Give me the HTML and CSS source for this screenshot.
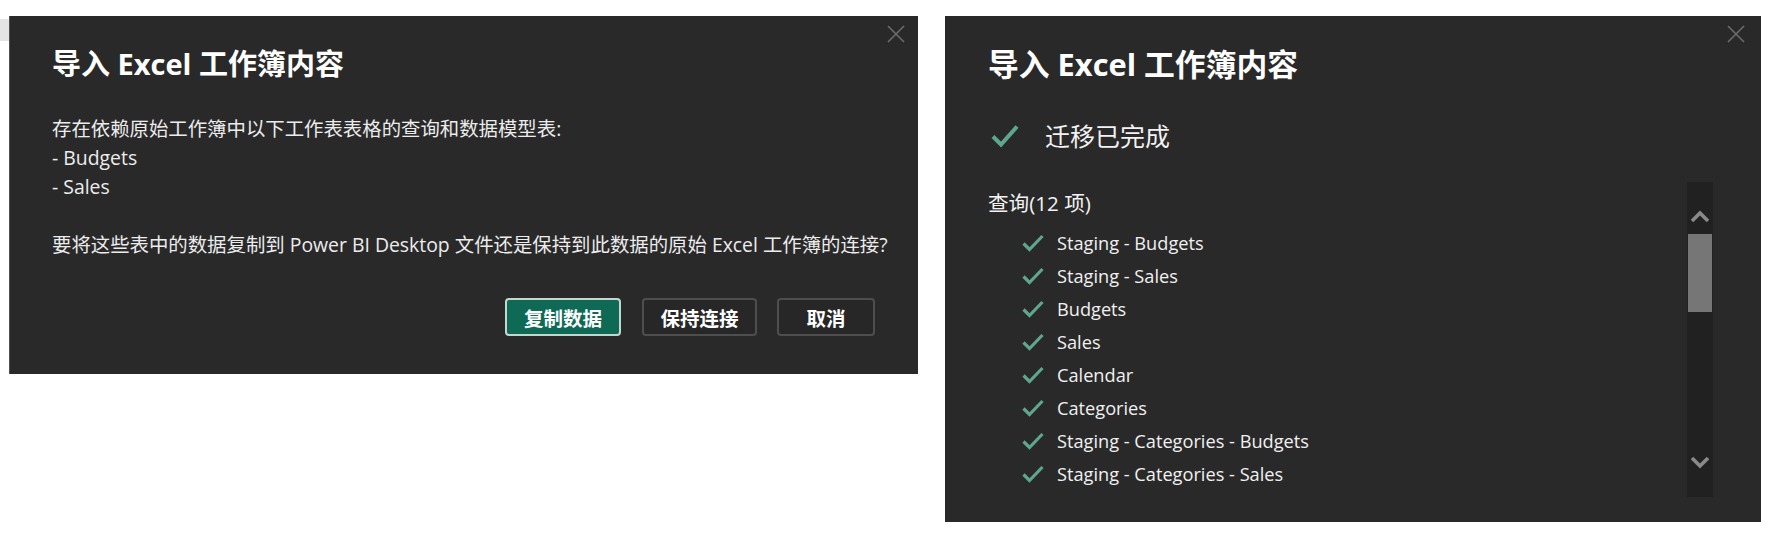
FILE: index.html
```html
<!DOCTYPE html>
<html lang="zh-CN">
<head>
<meta charset="utf-8">
<title>导入 Excel 工作簿内容</title>
<link rel="stylesheet" href="styles.css">
</head>
<body>
<div class="page">
  <div class="sliver"></div>

  <section class="dialog dialog-confirm">
    <button class="close" aria-label="关闭">
      <svg viewBox="0 0 18 18" width="18" height="18"><path d="M1 1 L17 17 M17 1 L1 17" stroke="#6b6b6b" stroke-width="1.6" fill="none"/></svg>
    </button>
    <h1 class="title">导入 Excel 工作簿内容</h1>
    <div class="body-text">
      <p>存在依赖原始工作簿中以下工作表表格的查询和数据模型表:</p>
      <p>- Budgets</p>
      <p>- Sales</p>
      <p class="blank">&nbsp;</p>
      <p>要将这些表中的数据复制到 Power BI Desktop 文件还是保持到此数据的原始 Excel 工作簿的连接?</p>
    </div>
    <div class="actions">
      <button class="btn btn-primary btn-copy">复制数据</button>
      <button class="btn btn-keep">保持连接</button>
      <button class="btn btn-cancel">取消</button>
    </div>
  </section>

  <section class="dialog dialog-done">
    <button class="close close-done" aria-label="关闭">
      <svg viewBox="0 0 18 18" width="18" height="18"><path d="M1 1 L17 17 M17 1 L1 17" stroke="#6b6b6b" stroke-width="1.6" fill="none"/></svg>
    </button>
    <h1 class="title title-done">导入 Excel 工作簿内容</h1>
    <div class="status">
      <svg class="check-big" viewBox="0 0 28 25" width="28" height="25"><path d="M2 13.5 L10 21.5 L26 3.5" stroke="#5ea68d" stroke-width="4" fill="none"/></svg>
      <span>迁移已完成</span>
    </div>
    <div class="results">
      <div class="list">
        <div class="list-head">查询(12 项)</div>
        <ul class="items">
          <li><svg class="check" viewBox="0 0 22 18" width="22" height="18"><path d="M1.5 9.5 L7.5 15.5 L20.5 2" stroke="#5ea68d" stroke-width="3.2" fill="none"/></svg><span>Staging - Budgets</span></li>
          <li><svg class="check" viewBox="0 0 22 18" width="22" height="18"><path d="M1.5 9.5 L7.5 15.5 L20.5 2" stroke="#5ea68d" stroke-width="3.2" fill="none"/></svg><span>Staging - Sales</span></li>
          <li><svg class="check" viewBox="0 0 22 18" width="22" height="18"><path d="M1.5 9.5 L7.5 15.5 L20.5 2" stroke="#5ea68d" stroke-width="3.2" fill="none"/></svg><span>Budgets</span></li>
          <li><svg class="check" viewBox="0 0 22 18" width="22" height="18"><path d="M1.5 9.5 L7.5 15.5 L20.5 2" stroke="#5ea68d" stroke-width="3.2" fill="none"/></svg><span>Sales</span></li>
          <li><svg class="check" viewBox="0 0 22 18" width="22" height="18"><path d="M1.5 9.5 L7.5 15.5 L20.5 2" stroke="#5ea68d" stroke-width="3.2" fill="none"/></svg><span>Calendar</span></li>
          <li><svg class="check" viewBox="0 0 22 18" width="22" height="18"><path d="M1.5 9.5 L7.5 15.5 L20.5 2" stroke="#5ea68d" stroke-width="3.2" fill="none"/></svg><span>Categories</span></li>
          <li><svg class="check" viewBox="0 0 22 18" width="22" height="18"><path d="M1.5 9.5 L7.5 15.5 L20.5 2" stroke="#5ea68d" stroke-width="3.2" fill="none"/></svg><span>Staging - Categories - Budgets</span></li>
          <li><svg class="check" viewBox="0 0 22 18" width="22" height="18"><path d="M1.5 9.5 L7.5 15.5 L20.5 2" stroke="#5ea68d" stroke-width="3.2" fill="none"/></svg><span>Staging - Categories - Sales</span></li>
        </ul>
      </div>
      <div class="scrollbar">
        <div class="sb-arrow sb-up">
          <svg viewBox="0 0 20 13" width="20" height="13"><path d="M2 11 L10 3 L18 11" stroke="#8a8a8a" stroke-width="3.6" fill="none"/></svg>
        </div>
        <div class="sb-thumb"></div>
        <div class="sb-track"></div>
        <div class="sb-arrow sb-down">
          <svg viewBox="0 0 20 13" width="20" height="13"><path d="M2 2 L10 10 L18 2" stroke="#8a8a8a" stroke-width="3.6" fill="none"/></svg>
        </div>
      </div>
    </div>
  </section>
</div>
</body>
</html>
```

FILE: styles.css
```css
* { box-sizing: border-box; }

html, body {
  margin: 0;
  padding: 0;
  background: #ffffff;
}

body {
  font-family: "Open Sans", "Noto Sans CJK SC", sans-serif;
  color: #f0f0f0;
}

.page {
  display: flex;
  align-items: flex-start;
  padding-top: 16px;
  width: 1771px;
  height: 540px;
}

.sliver {
  width: 9px;
  height: 22px;
  margin-top: 3px;
  background: #e4e4e4;
}

.dialog {
  position: relative;
  background: #292929;
  padding: 29px 43px 0 42px;
}

.dialog-confirm {
  width: 909px;
  height: 358px;
  border-left: 1px solid #4f4f4f;
}

.dialog-done {
  width: 816px;
  height: 506px;
  margin-left: 27px;
  padding-left: 43px;
  padding-right: 48px;
}

.close {
  position: absolute;
  top: 9px;
  right: 13px;
  padding: 0;
  border: 0;
  background: transparent;
  width: 18px;
  height: 18px;
  display: block;
}
.close svg { display: block; }
.close-done { right: 16px; }

.title {
  margin: 0;
  font-size: 29px;
  line-height: 38px;
  font-weight: 700;
  color: #ffffff;
  white-space: nowrap;
}
.title-done {
  font-size: 30.8px;
}

.body-text {
  margin-top: 31px;
  font-size: 19.4px;
  line-height: 29px;
  color: #ececec;
}
.body-text p {
  margin: 0;
  white-space: nowrap;
}

.actions {
  display: flex;
  justify-content: flex-end;
  gap: 20px;
  margin-top: 39px;
}

.btn {
  height: 38px;
  border: 2px solid #4e4e4e;
  border-radius: 4px;
  background: #272727;
  color: #ffffff;
  font-family: "Open Sans", "Noto Sans CJK SC", sans-serif;
  font-size: 19.5px;
  font-weight: 700;
  padding: 0;
  display: flex;
  align-items: center;
  justify-content: center;
}
.btn-copy { width: 116px; margin-right: 1px; }
.btn-keep { width: 115px; }
.btn-cancel { width: 98px; }

.btn-primary {
  background: #0f6a55;
  border-color: #c3d7cf;
}

.status {
  display: flex;
  align-items: center;
  height: 36px;
  margin-top: 34px;
  padding-left: 3px;
  font-size: 25px;
  color: #f2f2f2;
}
.check-big { display: block; margin-right: 26px; }

.results {
  display: flex;
  margin-top: 29px;
  height: 315px;
}

.list {
  flex: 1;
  overflow: hidden;
}

.list-head {
  height: 33px;
  line-height: 33px;
  margin-top: 5px;
  margin-bottom: 6px;
  font-size: 20.6px;
  color: #f2f2f2;
}

.items {
  list-style: none;
  margin: 0;
  padding: 0 0 0 34px;
}
.items li {
  height: 33px;
  display: flex;
  align-items: center;
  font-size: 18.2px;
  color: #f0f0f0;
}
.check { display: block; margin-right: 13px; }

.scrollbar {
  width: 26px;
  background: #212121;
  display: flex;
  flex-direction: column;
  align-items: center;
}
.sb-arrow {
  display: flex;
  align-items: center;
  justify-content: center;
  width: 100%;
}
.sb-up { height: 52px; padding-top: 17px; }
.sb-thumb {
  width: 24px;
  height: 78px;
  background: #767676;
}
.sb-track { flex: 1; }
.sb-down { height: 69px; }
.sb-arrow svg { display: block; }
```
